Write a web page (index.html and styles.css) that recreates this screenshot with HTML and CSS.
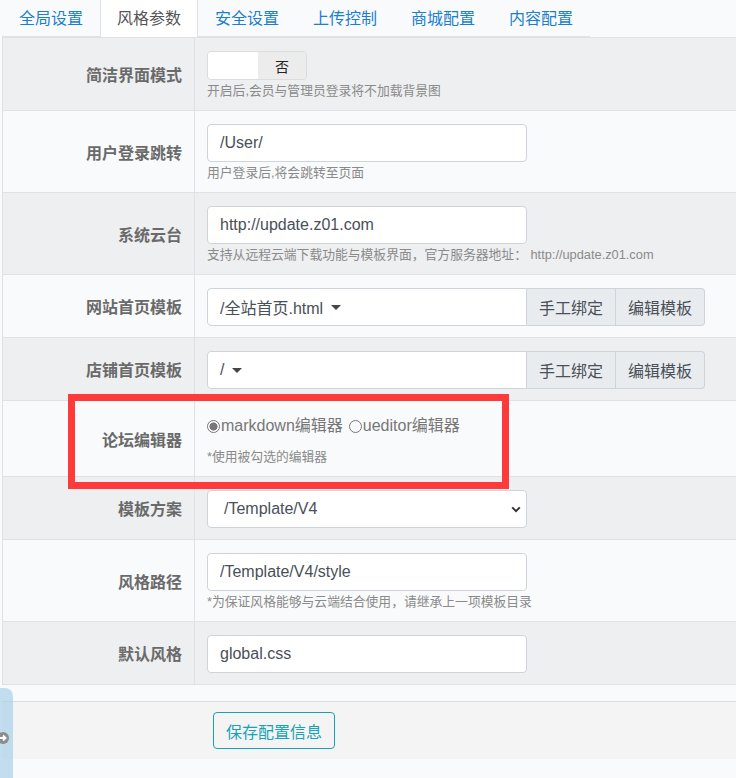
FILE: index.html
```html
<!DOCTYPE html>
<html lang="zh-CN">
<head>
    <meta charset="UTF-8">
    <meta name="viewport" content="width=device-width, initial-scale=1.0">
    <title>风格参数</title>
    <link rel="stylesheet" href="styles.css">
</head>
<body>
    <div class="page">
        <ul class="tabs">
            <li><a href="#">全局设置</a></li>
            <li class="active"><a href="#">风格参数</a></li>
            <li><a href="#">安全设置</a></li>
            <li><a href="#">上传控制</a></li>
            <li><a href="#">商城配置</a></li>
            <li><a href="#">内容配置</a></li>
        </ul>

        <div class="form-table">
            <div class="row odd">
                <div class="label">简洁界面模式</div>
                <div class="field">
                    <div class="switch"><span class="switch-on"></span><span class="switch-off">否</span></div>
                    <div class="help">开启后,会员与管理员登录将不加载背景图</div>
                </div>
            </div>
            <div class="row">
                <div class="label">用户登录跳转</div>
                <div class="field">
                    <input class="input" type="text" value="/User/">
                    <div class="help">用户登录后,将会跳转至页面</div>
                </div>
            </div>
            <div class="row odd">
                <div class="label">系统云台</div>
                <div class="field">
                    <input class="input" type="text" value="http://update.z01.com">
                    <div class="help">支持从远程云端下载功能与模板界面，官方服务器地址： http://update.z01.com</div>
                </div>
            </div>
            <div class="row">
                <div class="label">网站首页模板</div>
                <div class="field">
                    <div class="input-group">
                        <div class="dropdown">/全站首页.html <span class="caret"></span></div>
                        <span class="addon">手工绑定</span>
                        <span class="addon">编辑模板</span>
                    </div>
                </div>
            </div>
            <div class="row odd">
                <div class="label">店铺首页模板</div>
                <div class="field">
                    <div class="input-group">
                        <div class="dropdown">/ <span class="caret"></span></div>
                        <span class="addon">手工绑定</span>
                        <span class="addon">编辑模板</span>
                    </div>
                </div>
            </div>
            <div class="row">
                <div class="label">论坛编辑器</div>
                <div class="field">
                    <div class="radios">
                        <label class="radio checked"><span class="dot"></span>markdown编辑器</label>
                        <label class="radio"><span class="dot"></span>ueditor编辑器</label>
                    </div>
                    <div class="help help-far">*使用被勾选的编辑器</div>
                </div>
            </div>
            <div class="row odd">
                <div class="label">模板方案</div>
                <div class="field">
                    <div class="select">
                        <span>/Template/V4</span>
                        <svg width="10" height="7" viewBox="0 0 10 7"><path d="M1.2 1.3 L5 5.1 L8.8 1.3" fill="none" stroke="#333" stroke-width="1.9"/></svg>
                    </div>
                </div>
            </div>
            <div class="row">
                <div class="label">风格路径</div>
                <div class="field">
                    <input class="input" type="text" value="/Template/V4/style">
                    <div class="help">*为保证风格能够与云端结合使用，请继承上一项模板目录</div>
                </div>
            </div>
            <div class="row odd">
                <div class="label">默认风格</div>
                <div class="field">
                    <input class="input" type="text" value="global.css">
                </div>
            </div>
        </div>

        <div class="footer">
            <button class="btn-save">保存配置信息</button>
        </div>
    </div>

    <!-- 标注框 -->
    <div class="mark-box"></div>

    <!-- 左侧悬浮栏 -->
    <div class="side-tab">
        <svg class="side-icon" width="14" height="14" viewBox="0 0 14 14">
            <circle cx="7" cy="7" r="6" fill="#8c8c8c"/>
            <path d="M3.5 7 H9.5 M7 4.5 L9.6 7 L7 9.5" fill="none" stroke="#fff" stroke-width="1.8"/>
        </svg>
    </div>
</body>
</html>
```

FILE: styles.css
```css
/* 全局 */
body {
    margin: 0;
    background: #f9fafc;
    font-family: "Liberation Sans", "Noto Sans CJK SC", sans-serif;
    font-size: 16px;
    color: #495057;
    overflow: hidden;
}
.page {
    padding-left: 2px;
}

/* 标签页 */
.tabs {
    display: inline-flex;
    list-style: none;
    margin: 0;
    padding: 0;
    border-bottom: 1px solid #dee2e6;
    vertical-align: top;
}
.tabs li {
    margin-bottom: -1px;
}
.tabs a {
    display: block;
    box-sizing: border-box;
    height: 37px;
    padding: 5px 16px 0;
    line-height: 24px;
    border: 1px solid transparent;
    border-top: none;
    border-bottom: none;
    color: #1a7fcf;
    text-decoration: none;
    font-family: "Noto Sans CJK SC", sans-serif;
}
.tabs .active a {
    background: #fff;
    border-color: #dee2e6;
    color: #555;
}

/* 表单表格 */
.form-table {
    border-top: 1px solid #dee2e6;
    border-left: 1px solid #dee2e6;
    border-bottom: 1px solid #dee2e6;
    width: calc(100vw + 4px);
}
.row {
    display: grid;
    grid-template-columns: 192px 1fr;
    border-bottom: 1px solid #dee2e6;
}
.row:last-child {
    border-bottom: none;
}
.row.odd {
    background: #eeeff1;
}
.label {
    display: flex;
    align-items: center;
    justify-content: flex-end;
    padding-right: 12px;
    border-right: 1px solid #dee2e6;
    font-family: "Noto Sans CJK SC", sans-serif;
    font-weight: bold;
    color: #6a6a6a;
}
.field {
    padding: 13px 12px 11px;
}
.help {
    margin-top: 2px;
    line-height: 17px;
    font-size: 12.8px;
    color: #8a8a8a;
}
.help-far {
    margin-top: 10px;
}

/* 开关 */
.switch {
    display: flex;
    box-sizing: border-box;
    width: 100px;
    height: 29px;
    border: 1px solid #dcdcdc;
    border-radius: 4px;
    overflow: hidden;
}
.switch-on {
    width: 50px;
    background: #fff;
}
.switch-off {
    flex: 1;
    display: flex;
    align-items: center;
    justify-content: center;
    background: #ececec;
    color: #222;
    font-family: "Noto Sans CJK SC", sans-serif;
    font-size: 14px;
}

/* 输入框 */
.input,
.dropdown,
.select {
    box-sizing: border-box;
    width: 320px;
    height: 38px;
    padding: 0 12px;
    border: 1px solid #ced4da;
    border-radius: 4px;
    background: #fff;
    font-family: "Liberation Sans", "Noto Sans CJK SC", sans-serif;
    font-size: 16px;
    color: #495057;
    display: block;
    margin: 0;
}
.input-group {
    display: flex;
}
.dropdown {
    display: flex;
    align-items: center;
    border-radius: 4px 0 0 4px;
}
.caret {
    display: inline-block;
    margin-left: 8px;
    border-left: 5px solid transparent;
    border-right: 5px solid transparent;
    border-top: 5px solid #444;
}
.addon {
    display: flex;
    align-items: center;
    box-sizing: border-box;
    height: 38px;
    padding: 0 12px;
    background: #e9ecef;
    border: 1px solid #ced4da;
    border-left: none;
    font-family: "Noto Sans CJK SC", sans-serif;
    color: #495057;
}
.addon:last-child {
    border-radius: 0 4px 4px 0;
}
.select {
    display: flex;
    align-items: center;
    justify-content: space-between;
    padding: 0 5px 0 16px;
}

/* 单选 */
.radios {
    display: flex;
    gap: 6px;
    line-height: 24px;
    color: #777;
}
.radio {
    display: flex;
    align-items: center;
}
.radio .dot {
    box-sizing: border-box;
    width: 13px;
    height: 13px;
    margin-right: 1px;
    border: 1px solid #777;
    border-radius: 50%;
}
.radio.checked .dot {
    border-width: 1.5px;
    background: radial-gradient(circle, #777 0 3.8px, #fff 4.3px);
}

/* 底部 */
.footer {
    margin-top: 16px;
    border-top: 1px solid #dcdcdc;
    background: #f4f4f4;
    padding: 10px 0 10px 211px;
}
.btn-save {
    height: 37px;
    padding: 0 12px;
    background: transparent;
    border: 1px solid #17a2b8;
    border-radius: 4px;
    color: #17a2b8;
    font-family: "Noto Sans CJK SC", sans-serif;
    font-size: 16px;
    cursor: pointer;
}

/* 标注与悬浮 */
.mark-box {
    position: absolute;
    left: 68px;
    top: 394px;
    width: 441px;
    height: 95px;
    box-sizing: border-box;
    border: 7px solid #fe3a3a;
}
.side-tab {
    position: fixed;
    left: 0;
    top: 688px;
    width: 13px;
    height: 100px;
    background: rgba(170, 208, 232, 0.7);
    border-top-right-radius: 8px;
}
.side-icon {
    position: absolute;
    left: -4px;
    top: 43px;
}
```
